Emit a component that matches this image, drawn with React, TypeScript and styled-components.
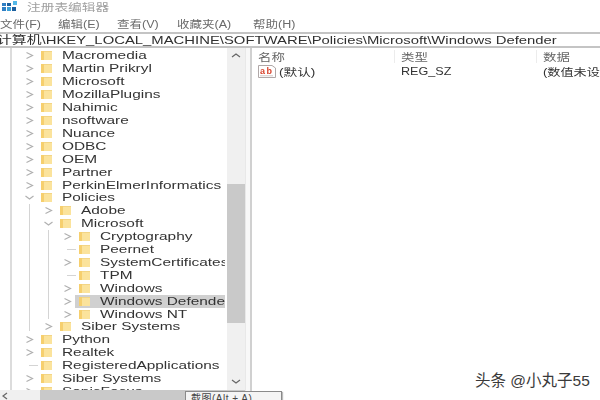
import React from "react";
import styled, { createGlobalStyle } from "styled-components";

const Global = createGlobalStyle`
  html, body { margin: 0; padding: 0; width: 600px; height: 400px; overflow: hidden; background: #fff; }
  * { box-sizing: border-box; }
`;

const Page = styled.div`
  position: relative;
  width: 600px;
  height: 400px;
  overflow: hidden;
  background: #fff;
  color: #2a2a2a;
  font-family: "Liberation Sans", "Noto Sans CJK SC", sans-serif;
`;

const Window = styled.div`
  display: flex;
  flex-direction: column;
  width: 600px;
  height: 400px;
  filter: blur(0.4px);
`;

const Wide = styled.span<{ $x?: number }>`
  display: inline-block;
  white-space: nowrap;
  transform: scaleX(${(p) => p.$x ?? 1.4});
  transform-origin: left center;
`;

const TitleBar = styled.div`
  display: flex;
  align-items: center;
  gap: 9px;
  height: 14px;
  padding: 0 0 2px 2px;
  flex: none;
  font-size: 10px;
  color: #a0a0a0;
`;

const MenuBar = styled.div`
  display: flex;
  height: 18px;
  padding: 4px 0 0 0;
  flex: none;
  font-size: 10px;
  line-height: 13px;
  color: #6a6a6a;
`;

const MenuItem = styled.span<{ $w: number }>`
  width: ${(p) => p.$w}px;
  flex: none;
  white-space: nowrap;
`;

const AddressBar = styled.div`
  height: 16px;
  flex: none;
  padding-left: 0;
  border-top: 2px solid #c4c4c4;
  border-bottom: 2px solid #c4c4c4;
  font-size: 11px;
  line-height: 12px;
  color: #303030;
  overflow: hidden;
  white-space: nowrap;
`;

const AddressText = styled(Wide)`
  margin-left: -3px;
`;

const Panes = styled.div`
  display: flex;
  flex: 1;
  min-height: 0;
`;

const TreePane = styled.div`
  position: relative;
  display: flex;
  flex: none;
  width: 245px;
  overflow: hidden;
`;

const TreeEdge = styled.div`
  width: 12px;
  flex: none;
  border-right: 2px solid #dcdcdc;
`;

const TreeBody = styled.div`
  width: 215px;
  flex: none;
  padding: 1.5px 0 0 11px;
  overflow: hidden;
  font-size: 11px;
  color: #333;
`;

const Row = styled.div`
  display: flex;
  align-items: center;
  height: 12.92px;
`;

const Slot = styled.div`
  position: relative;
  width: 13px;
  height: 100%;
  flex: none;
  display: flex;
  align-items: center;
  justify-content: center;
  color: #b0b0b0;
`;

const LeafDash = styled.div`
  position: absolute;
  left: 6px;
  right: -2px;
  top: 6px;
  height: 1px;
  background: #d4d4d4;
`;

const Entry = styled.div<{ $selected?: boolean }>`
  display: flex;
  align-items: center;
  flex: 1;
  height: 100%;
  min-width: 0;
  margin-left: 1px;
  padding-left: 4px;
  margin-right: 2px;
  background: ${(p) => (p.$selected ? "#d0d0d0" : "transparent")};
  overflow: hidden;
`;

const Name = styled.div`
  margin-left: 10px;
  line-height: 13px;
  flex: none;
`;

const Branch = styled.div`
  position: relative;
  padding-left: 19px;
  &::before {
    content: "";
    position: absolute;
    left: 6px;
    top: 0;
    bottom: 2px;
    width: 1px;
    background: #d4d4d4;
  }
`;

const VScroll = styled.div`
  position: relative;
  width: 18px;
  flex: none;
  background: #f0f0f0;
  margin-bottom: 10px;
`;

const ScrollThumb = styled.div`
  position: absolute;
  left: 0;
  right: 0;
  top: 136px;
  height: 139px;
  background: #c9c9c9;
`;

const ScrollUp = styled.div`
  position: absolute;
  left: 4px;
  top: 3px;
  color: #666;
  display: flex;
`;

const ScrollDown = styled(ScrollUp)`
  top: auto;
  bottom: 4px;
`;

const HScroll = styled.div`
  position: absolute;
  left: 0;
  right: 0;
  bottom: 0;
  height: 10px;
  background: #f0f0f0;
  display: flex;
`;

const HArrow = styled.div`
  width: 40px;
  padding: 2px 0 0 2px;
  color: #666;
  display: flex;
`;

const HThumb = styled.div`
  flex: 1;
  background: #c9c9c9;
`;

const Splitter = styled.div`
  width: 7px;
  flex: none;
  border-left: 1px solid #e8e8e8;
  border-right: 2px solid #d0d0d0;
  background: #f8f8f8;
`;

const ListPane = styled.div`
  flex: 1;
  min-width: 0;
  overflow: hidden;
  font-size: 10.5px;
`;

const HeaderRow = styled.div`
  display: flex;
  height: 15px;
  color: #666;
  align-items: center;
  padding-top: 2px;
`;

const ListRow = styled.div`
  display: flex;
  height: 14px;
  align-items: center;
  color: #333;
  margin-top: 1px;
`;

const Cell = styled.div<{ $w: number }>`
  width: ${(p) => p.$w}px;
  flex: none;
  padding-left: 6px;
  white-space: nowrap;
  overflow: hidden;
  display: flex;
  align-items: center;
`;

const HeadCell = styled(Cell)`
  border-right: 1px solid #ececec;
  height: 13px;
`;

const NameCell = styled(Cell)`
  gap: 3px;
`;

const Tooltip = styled.div`
  position: absolute;
  left: 185px;
  top: 391px;
  width: 97px;
  height: 20px;
  background: #f4f4f4;
  border: 1px solid #8a8a8a;
  box-shadow: 1px 1px 1px #bbb;
  padding: 1px 0 0 5px;
  font-size: 10px;
  line-height: 12px;
  color: #444;
  white-space: nowrap;
  letter-spacing: 0.5px;
`;

const Watermark = styled.div`
  position: absolute;
  left: 475px;
  top: 372px;
  font-size: 15.5px;
  line-height: 18px;
  color: #3a3a3a;
  white-space: nowrap;
`;

type NodeT = { name: string; kind: "closed" | "open" | "leaf"; selected?: boolean; children?: NodeT[] };

const tree: NodeT[] = [
  { name: "Macromedia", kind: "closed" },
  { name: "Martin Prikryl", kind: "closed" },
  { name: "Microsoft", kind: "closed" },
  { name: "MozillaPlugins", kind: "closed" },
  { name: "Nahimic", kind: "closed" },
  { name: "nsoftware", kind: "closed" },
  { name: "Nuance", kind: "closed" },
  { name: "ODBC", kind: "closed" },
  { name: "OEM", kind: "closed" },
  { name: "Partner", kind: "closed" },
  { name: "PerkinElmerInformatics", kind: "closed" },
  {
    name: "Policies",
    kind: "open",
    children: [
      { name: "Adobe", kind: "closed" },
      {
        name: "Microsoft",
        kind: "open",
        children: [
          { name: "Cryptography", kind: "closed" },
          { name: "Peernet", kind: "leaf" },
          { name: "SystemCertificates", kind: "closed" },
          { name: "TPM", kind: "leaf" },
          { name: "Windows", kind: "closed" },
          { name: "Windows Defender", kind: "closed", selected: true },
          { name: "Windows NT", kind: "closed" },
        ],
      },
      { name: "Siber Systems", kind: "closed" },
    ],
  },
  { name: "Python", kind: "closed" },
  { name: "Realtek", kind: "closed" },
  { name: "RegisteredApplications", kind: "leaf" },
  { name: "Siber Systems", kind: "closed" },
  { name: "SonicFocus", kind: "closed" },
];

const Chevron = ({ open }: { open: boolean }) => (
  <svg width="9" height="9" viewBox="0 0 9 9" fill="none" stroke="currentColor" strokeWidth="1.2">
    {open ? <path d="M0.5 3l4 3 4-3" /> : <path d="M1.5 1.5l6 3-6 3" />}
  </svg>
);

const Folder = () => (
  <svg width="11" height="9" viewBox="0 0 11 9" style={{ flex: "none" }}>
    <rect x="0" y="0" width="11" height="9" fill="#fbe39c" />
    <rect x="0" y="0" width="3" height="9" fill="#f6cf6e" />
    <rect x="3" y="0" width="8" height="1" fill="#f3d585" />
  </svg>
);

const RegIcon = () => (
  <svg width="18" height="13" viewBox="0 0 18 13" style={{ flex: "none" }}>
    <path d="M0.5 0.5H14L17.5 3V12.5H0.5Z" fill="#fff" stroke="#b0a8a8" />
    <text x="2" y="8.5" fontSize="9" fontWeight="700" fontFamily="Liberation Sans" fill="#d8442e" textLength="12">
      ab
    </text>
    <path d="M2 10.8H15" stroke="#d0c8c8" />
  </svg>
);

const AppIcon = () => (
  <svg width="16" height="11" viewBox="0 0 16 11" style={{ flex: "none" }}>
    <rect x="0" y="2" width="4" height="3" fill="#2f7fc4" />
    <rect x="0" y="6" width="4" height="4" fill="#2f7fc4" />
    <rect x="5" y="2" width="4" height="3" fill="#1c5f9e" />
    <rect x="5" y="6" width="4" height="4" fill="#3aa0d8" />
    <rect x="10" y="6" width="4" height="4" fill="#1c5f9e" />
    <rect x="11" y="0" width="4" height="4" fill="#54b8e8" />
  </svg>
);

const TreeNode = ({ node }: { node: NodeT }) => (
  <>
    <Row>
      <Slot>
        {node.kind === "leaf" ? <LeafDash /> : <Chevron open={node.kind === "open"} />}
      </Slot>
      <Entry $selected={node.selected}>
        <Folder />
        <Name>
          <Wide>{node.name}</Wide>
        </Name>
      </Entry>
    </Row>
    {node.children && (
      <Branch>
        {node.children.map((c) => (
          <TreeNode key={c.name} node={c} />
        ))}
      </Branch>
    )}
  </>
);

export default function App() {
  return (
    <Page>
      <Global />
      <Window>
        <TitleBar>
          <AppIcon />
          <Wide $x={1.37}>注册表编辑器</Wide>
        </TitleBar>
        <MenuBar>
          <MenuItem $w={58}><Wide $x={1.25}>文件(F)</Wide></MenuItem>
          <MenuItem $w={59}><Wide $x={1.25}>编辑(E)</Wide></MenuItem>
          <MenuItem $w={60}><Wide $x={1.25}>查看(V)</Wide></MenuItem>
          <MenuItem $w={76}><Wide $x={1.25}>收藏夹(A)</Wide></MenuItem>
          <MenuItem $w={60}><Wide $x={1.25}>帮助(H)</Wide></MenuItem>
        </MenuBar>
        <AddressBar>
          <AddressText $x={1.35}>计算机\HKEY_LOCAL_MACHINE\SOFTWARE\Policies\Microsoft\Windows Defender</AddressText>
        </AddressBar>
        <Panes>
          <TreePane>
            <TreeEdge />
            <TreeBody>
              {tree.map((n) => (
                <TreeNode key={n.name} node={n} />
              ))}
            </TreeBody>
            <VScroll>
              <ScrollUp>
                <svg width="10" height="8" viewBox="0 0 10 8" fill="none" stroke="currentColor" strokeWidth="1.2">
                  <path d="M1 6l4-3 4 3" />
                </svg>
              </ScrollUp>
              <ScrollThumb />
              <ScrollDown>
                <svg width="10" height="8" viewBox="0 0 10 8" fill="none" stroke="currentColor" strokeWidth="1.2">
                  <path d="M1 2l4 3 4-3" />
                </svg>
              </ScrollDown>
            </VScroll>
            <HScroll>
              <HArrow>
                <svg width="6" height="8" viewBox="0 0 6 8" fill="none" stroke="currentColor" strokeWidth="1.2">
                  <path d="M5 1L1 4l4 3" />
                </svg>
              </HArrow>
              <HThumb />
            </HScroll>
          </TreePane>
          <Splitter />
          <ListPane>
            <HeaderRow>
              <HeadCell $w={143}><Wide $x={1.28}>名称</Wide></HeadCell>
              <HeadCell $w={142}><Wide $x={1.28}>类型</Wide></HeadCell>
              <Cell $w={70}><Wide $x={1.28}>数据</Wide></Cell>
            </HeaderRow>
            <ListRow>
              <NameCell $w={143}>
                <RegIcon />
                <Wide $x={1.3}>(默认)</Wide>
              </NameCell>
              <Cell $w={142}>
                <Wide $x={1.2}>REG_SZ</Wide>
              </Cell>
              <Cell $w={70}><Wide $x={1.25}>(数值未设</Wide></Cell>
            </ListRow>
          </ListPane>
        </Panes>
      </Window>
      <Tooltip>截图(Alt + A)</Tooltip>
      <Watermark>头条 @小丸子55</Watermark>
    </Page>
  );
}
